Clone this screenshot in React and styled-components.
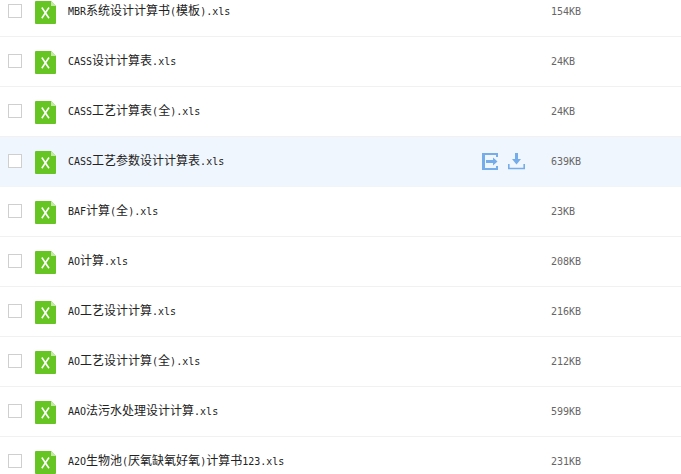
import React from "react";
import styled, { createGlobalStyle } from "styled-components";

const files = [
  { name: "MBR系统设计计算书(模板).xls", size: "154KB" },
  { name: "CASS设计计算表.xls", size: "24KB" },
  { name: "CASS工艺计算表(全).xls", size: "24KB" },
  { name: "CASS工艺参数设计计算表.xls", size: "639KB", active: true },
  { name: "BAF计算(全).xls", size: "23KB" },
  { name: "AO计算.xls", size: "208KB" },
  { name: "AO工艺设计计算.xls", size: "216KB" },
  { name: "AO工艺设计计算(全).xls", size: "212KB" },
  { name: "AAO法污水处理设计计算.xls", size: "599KB" },
  { name: "A2O生物池(厌氧缺氧好氧)计算书123.xls", size: "231KB" },
];

const GlobalStyle = createGlobalStyle`
  html, body {
    margin: 0;
    height: 100%;
    overflow: hidden;
    background: #fff;
  }
`;

const Viewport = styled.div`
  width: 681px;
  height: 474px;
  overflow: hidden;
`;

const List = styled.ul`
  list-style: none;
  margin: -13px 0 0;
  padding: 0;
`;

const Row = styled.li`
  display: flex;
  align-items: center;
  box-sizing: border-box;
  height: 50px;
  padding-left: 8px;
  border-bottom: 1px solid ${(p) => (p.$active ? "#f1f5f9" : "#f1f1f1")};
  background: ${(p) => (p.$active ? "#f0f6fd" : "#fff")};
`;

const Checkbox = styled.span`
  box-sizing: border-box;
  flex: none;
  width: 14px;
  height: 14px;
  margin-top: -1px;
  border: 1px solid #cfcfcf;
  background: #fff;
`;

const FileBadge = styled.svg`
  flex: none;
  display: block;
  width: 21px;
  height: 23px;
  margin-left: 13px;
  margin-top: 2px;
`;

const Name = styled.div`
  flex: 1;
  margin-left: 12px;
  margin-bottom: 2px;
  color: #222;
  font-size: 12px;
  line-height: 16px;
  white-space: nowrap;
  font-family: "Noto Sans CJK SC", sans-serif;
`;

const Latin = styled.span`
  font-family: "DejaVu Sans Mono", monospace;
  font-size: 10px;
`;

const Actions = styled.div`
  display: flex;
  align-items: center;
  gap: 9px;
  margin-right: 26px;
`;

const ActionIcon = styled.svg`
  display: block;
  width: 17px;
  height: 17px;
  color: #74ade9;
`;

const Size = styled.div`
  flex: none;
  width: 130px;
  color: #666;
  font-family: "DejaVu Sans Mono", monospace;
  font-size: 10px;
`;

function XlsIcon() {
  return (
    <FileBadge viewBox="0 0 21 23">
      <path d="M1 0H16L21 5V22a1 1 0 0 1-1 1H1a1 1 0 0 1-1-1V1a1 1 0 0 1 1-1z" fill="#66c523" />
      <path d="M16 0L21 5H16z" fill="#c5eaa8" />
      <path d="M6.8 6.5L14 17.2M14 6.5L6.8 17.2" stroke="#fff" strokeWidth="1.6" fill="none" />
    </FileBadge>
  );
}

function MoveIcon() {
  return (
    <ActionIcon viewBox="0 0 17 17">
      <path d="M0 0H16V4H14V2H3V15H14V13H16V17H0z" fill="currentColor" />
      <path d="M4 7H11V4.5L15.5 8.5L11 12.5V10H4z" fill="currentColor" />
    </ActionIcon>
  );
}

function DownloadIcon() {
  return (
    <ActionIcon viewBox="0 0 17 17">
      <path d="M7 0H10V6H13L8.5 11.5L4 6H7z" fill="currentColor" />
      <path d="M0.8 11V15.5H16.2V11" fill="none" stroke="currentColor" strokeWidth="1.6" />
    </ActionIcon>
  );
}

// cjk runs stay at 12px, latin runs drop to 10px mono so they sit at half width
function FileName({ text }) {
  const runs = text.match(/[\x00-\x7f]+|[^\x00-\x7f]+/g);
  return (
    <Name>
      {runs.map((r, i) =>
        /^[\x00-\x7f]/.test(r) ? <Latin key={i}>{r}</Latin> : <span key={i}>{r}</span>
      )}
    </Name>
  );
}

export default function App() {
  return (
    <Viewport>
      <GlobalStyle />
      <List>
        {files.map((f) => (
          <Row key={f.name} $active={f.active}>
            <Checkbox />
            <XlsIcon />
            <FileName text={f.name} />
            {f.active && (
              <Actions>
                <MoveIcon />
                <DownloadIcon />
              </Actions>
            )}
            <Size>{f.size}</Size>
          </Row>
        ))}
      </List>
    </Viewport>
  );
}
